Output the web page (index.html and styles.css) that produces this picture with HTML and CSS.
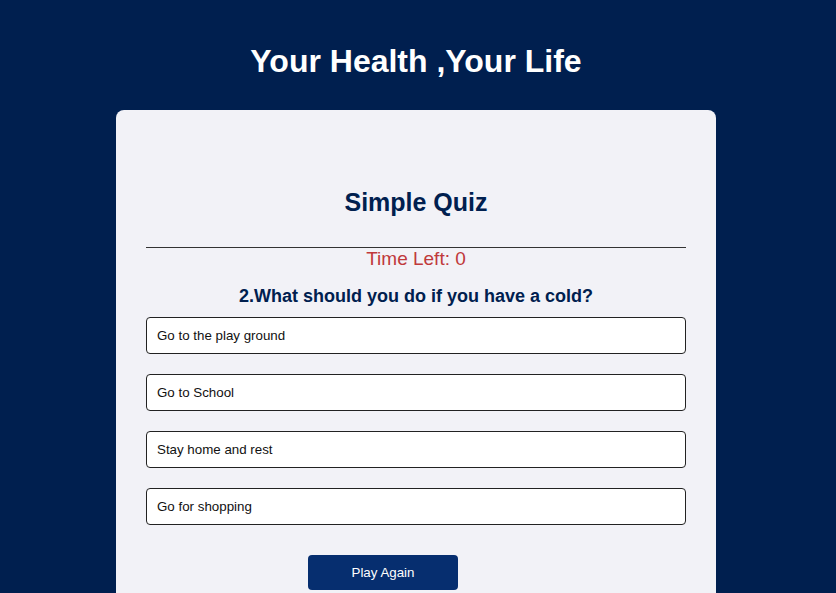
FILE: index.html
```html
<!DOCTYPE html>
<html>
<head>
<meta charset="utf-8">
<link rel="stylesheet" href="styles.css">
</head>
<body>
<div class="page">
<header class="header">
  <h1 class="title">Your Health ,Your Life</h1>
</header>
<main class="card">
  <h2 class="quiz-title">Simple Quiz</h2>
  <hr class="divider">
  <div class="timer">Time Left: 0</div>
  <h3 class="question">2.What should you do if you have a cold?</h3>
  <div class="options">
    <button class="option">Go to the play ground</button>
    <button class="option">Go to School</button>
    <button class="option">Stay home and rest</button>
    <button class="option">Go for shopping</button>
  </div>
  <div class="actions">
    <button class="play-again">Play Again</button>
  </div>
</main>
</div>
</body>
</html>
```
FILE: styles.css
```css
html, body {
  margin: 0;
  padding: 0;
  height: 100%;
  overflow: hidden;
}
body {
  background: #001f4f;
  font-family: "Liberation Sans", Arial, sans-serif;
}
.page {
  width: 832px;
}
.header {
  padding-top: 43px;
  padding-bottom: 30px;
  text-align: center;
}
.title {
  margin: 0;
  font-size: 32px;
  line-height: 37px;
  font-weight: bold;
  color: #ffffff;
}
.card {
  width: 540px;
  margin: 0 auto;
  background: #f2f2f7;
  border-radius: 8px;
  padding: 78px 30px 40px;
}
.quiz-title {
  margin: 0;
  font-size: 25px;
  line-height: 28px;
  text-align: center;
  color: #00204f;
}
.divider {
  margin: 31px 0 0;
  border: 0;
  border-top: 1px solid #333;
  height: 0;
}
.timer {
  text-align: center;
  font-size: 19px;
  line-height: 21px;
  color: #c0393b;
}
.question {
  margin: 17px 0 0;
  font-size: 18px;
  line-height: 21px;
  text-align: center;
  color: #00204f;
}
.options {
  margin-top: 10px;
  display: flex;
  flex-direction: column;
  gap: 20px;
}
.option {
  display: block;
  width: 100%;
  height: 37px;
  box-sizing: border-box;
  background: #ffffff;
  border: 1px solid #222;
  border-radius: 4px;
  padding: 0 10px;
  text-align: left;
  font-family: "Liberation Sans", Arial, sans-serif;
  font-size: 13.33px;
  color: #111;
}
.actions {
  margin-top: 30px;
  padding-left: 162px;
}
.play-again {
  width: 150px;
  height: 35px;
  border: 0;
  border-radius: 4px;
  background: #062e6f;
  color: #ffffff;
  font-family: "Liberation Sans", Arial, sans-serif;
  font-size: 13.33px;
}
```
